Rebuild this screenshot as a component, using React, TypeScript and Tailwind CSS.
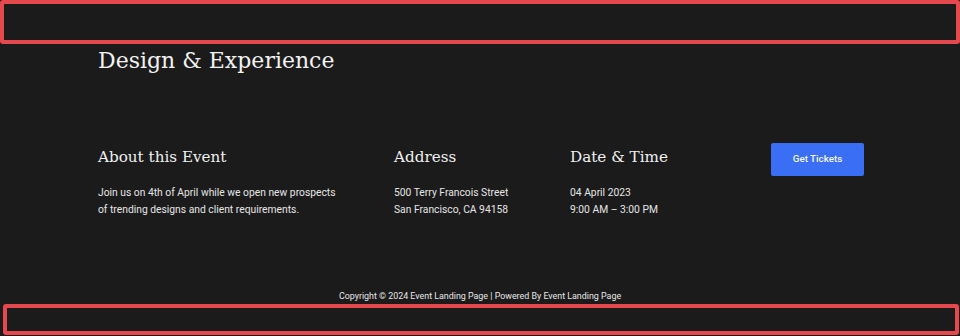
const serif = "font-['DejaVu_Serif','Liberation_Serif',serif]"

const details = [
  {
    title: "Address",
    lines: ["500 Terry Francois Street", "San Francisco, CA 94158"],
    width: "w-[176px]",
  },
  {
    title: "Date & Time",
    lines: ["04 April 2023", "9:00 AM – 3:00 PM"],
    width: "w-[201px]",
  },
]

const App = () => {
  return (
    <div className="relative h-[336px] w-[960px] overflow-hidden bg-[#1b1b1b] font-['Roboto',sans-serif] text-white">
      {/* annotation boxes */}
      <div className="absolute left-0 top-0 h-[44px] w-[960px] rounded-[3px] border-[4px] border-[#e5484d]" />
      <div className="absolute left-[3px] top-[304px] h-[31px] w-[956px] rounded-[3px] border-[4px] border-[#e5484d]" />

      <div className="flex w-[960px] flex-col pl-[98px] pt-[44px]">
        <h1 className={`${serif} text-[22px] leading-[34px] text-[#f2f2f2]`}>Design &amp; Experience</h1>

        <div className="mt-[66px] flex items-start">
          <div className="w-[296px]">
            <h2 className={`${serif} text-[15.2px] leading-[26px] text-[#f0f0f0]`}>About this Event</h2>
            <p className="mt-[14px] text-[10.3px] leading-[17px] text-[#e6e6e6]">
              Join us on 4th of April while we open new prospects
              <br />
              of trending designs and client requirements.
            </p>
          </div>

          {details.map((d) => (
            <div key={d.title} className={d.width}>
              <h2 className={`${serif} text-[15.2px] leading-[26px] text-[#f0f0f0]`}>{d.title}</h2>
              <p className="mt-[14px] text-[10.3px] leading-[17px] text-[#e6e6e6]">
                {d.lines[0]}
                <br />
                {d.lines[1]}
              </p>
            </div>
          ))}

          <button className="mt-[-1px] h-[33px] w-[93px] rounded-[2px] bg-[#3a6ff5] text-[9.8px] font-medium text-[#f4f6ff]">
            Get Tickets
          </button>
        </div>

        <p className="-ml-[98px] mt-[71px] text-center text-[8.9px] leading-[14px] text-[#e8e8e8]">
          Copyright © 2024 Event Landing Page | Powered By Event Landing Page
        </p>
      </div>
    </div>
  )
}

export default App
